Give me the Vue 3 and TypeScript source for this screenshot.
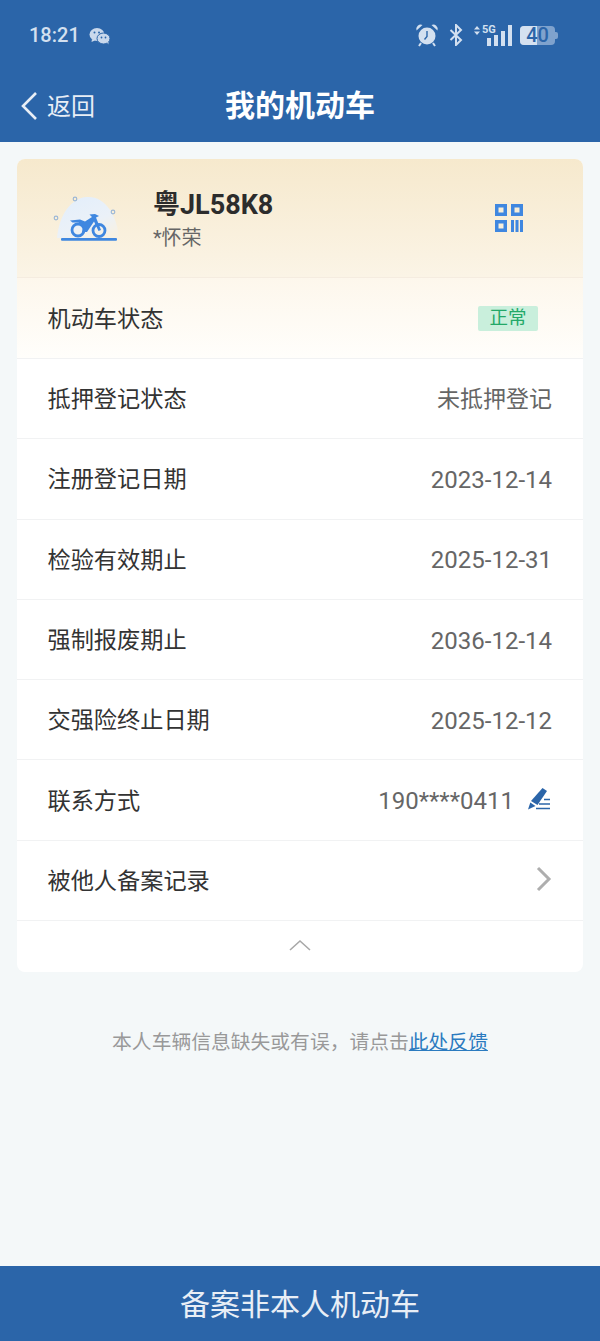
<template>
  <div class="page">
    <header class="head">
      <div class="status">
        <span class="time">18:21</span>
        <svg class="wechat" width="22" height="18" viewBox="0 0 22 18">
          <ellipse cx="8" cy="7.5" rx="7.5" ry="6.5" fill="#c9d8ec" />
          <path d="M3 12l-.5 3 3.500-1.500z" fill="#c9d8ec" />
          <ellipse cx="14.5" cy="11.5" rx="6.5" ry="5.5" fill="#c9d8ec" stroke="#2b65a9" stroke-width="1" />
          <path d="M18 15.500l1.500 2-.2-3z" fill="#c9d8ec" />
          <circle cx="5.500" cy="5.500" r="1" fill="#2b65a9" />
          <circle cx="10" cy="5.500" r="1" fill="#2b65a9" />
          <circle cx="12.500" cy="10.500" r=".9" fill="#2b65a9" />
          <circle cx="16.500" cy="10.500" r=".9" fill="#2b65a9" />
        </svg>
        <div class="status-right">
          <svg width="24" height="24" viewBox="0 0 24 24">
            <circle cx="12" cy="13" r="8.500" fill="#d3e0f0" />
            <path d="M12 8v5.500l-2.500 3" fill="none" stroke="#2b65a9" stroke-width="1.400" />
            <path d="M1.500 7.500a4.500 4.500 0 0 1 6-5.500zM22.500 7.500a4.500 4.500 0 0 0-6-5.500z" fill="#d3e0f0" />
            <path d="M6 20l-2 3M18 20l2 3" stroke="#d3e0f0" stroke-width="2" />
          </svg>
          <svg width="14" height="22" viewBox="0 0 14 22">
            <path d="M1.500 6l10.500 10-5 5V1l5 5L1.500 16" fill="none" stroke="#d3e0f0" stroke-width="2" />
          </svg>
          <div class="signal">
            <svg class="arrows" width="6" height="9" viewBox="0 0 6 9">
              <path d="M3 0l3 3.500H0zM3 9L0 5.500h6z" fill="#d3e0f0" />
            </svg>
            <span class="net">5G</span>
            <span class="bar b1"></span>
            <span class="bar b2"></span>
            <span class="bar b3"></span>
            <span class="bar b4"></span>
          </div>
          <div class="battery">
            <div class="fill"></div>
            <span class="level">40</span>
            <div class="nub"></div>
          </div>
        </div>
      </div>
      <div class="nav">
        <div class="back">
          <svg width="18" height="30" viewBox="0 0 18 30">
            <path d="M16 2L3 15l13 13" fill="none" stroke="#e8eef6" stroke-width="2.600" />
          </svg>
          <span>返回</span>
        </div>
        <h1>我的机动车</h1>
      </div>
    </header>

    <main class="content">
      <section class="card">
        <div class="plate">
          <svg class="moto" width="76" height="56" viewBox="0 0 76 56">
            <defs>
              <linearGradient id="bubble" x1="0.2" y1="0" x2="0.8" y2="1">
                <stop offset="0" stop-color="#e3eefb" />
                <stop offset="0.6" stop-color="#ebf1f8" />
                <stop offset="1" stop-color="#f8f1e2" />
              </linearGradient>
            </defs>
            <path d="M8 48C10 25 22 8 38 7c18-1 30 18 32 41z" fill="url(#bubble)" />
            <circle cx="26" cy="9" r="1.800" fill="none" stroke="#9db8d6" stroke-width="1.200" />
            <circle cx="64" cy="22" r="1.800" fill="none" stroke="#9db8d6" stroke-width="1.200" />
            <circle cx="7" cy="28" r="1.800" fill="none" stroke="#9db8d6" stroke-width="1.200" />
            <circle cx="29" cy="40" r="6" fill="none" stroke="#3f87e0" stroke-width="2.800" />
            <circle cx="50" cy="40.500" r="6" fill="none" stroke="#3f87e0" stroke-width="2.800" />
            <path d="M21 30.500L31 29.500l5 2 7-4.500-2.500-2.500 5.500-.500 4 2-3 1.500 5 12.500-2.500 1-4.500-9.500-7 10.500h-5l1.500-5-5-4.500h-6z" fill="#3f87e0" />
            <rect x="12" y="48" width="56" height="2.800" rx="1" fill="#3f87e0" />
          </svg>
          <div class="owner">
            <div class="number">粤JL58K8</div>
            <div class="name">*怀荣</div>
          </div>
          <svg class="qr" width="28" height="28" viewBox="0 0 28 28">
            <g fill="none" stroke="#3f87e0" stroke-width="3.500">
              <rect x="1.750" y="1.750" width="8.500" height="8.500" />
              <rect x="17.750" y="1.750" width="8.500" height="8.500" />
              <rect x="1.750" y="17.750" width="8.500" height="8.500" />
            </g>
            <path d="M16 16h3v12h-3zM20.500 16h3v12h-3zM25 16h3v12h-3z" fill="#3f87e0" />
          </svg>
        </div>
        <div class="row status-row">
          <span class="label">机动车状态</span>
          <span class="tag">正常</span>
        </div>
        <div v-for="r in rows" :key="r.label" class="row">
          <span class="label">{{ r.label }}</span>
          <span class="value" :class="{ num: r.num }">{{ r.value }}</span>
        </div>
        <div class="row">
          <span class="label">联系方式</span>
          <span class="value num">190****0411</span>
          <svg class="edit" width="24" height="24" viewBox="0 0 24 24">
            <path d="M14.500 0L19 3l-9.500 14L3 13z" fill="#2b65a9" />
            <path d="M2.300 14.500L7.500 18 0 21.500z" fill="#2b65a9" />
            <path d="M16 11.500h6M11 16h11M8 20.500h14" stroke="#2b65a9" stroke-width="1.400" />
          </svg>
        </div>
        <div class="row">
          <span class="label">被他人备案记录</span>
          <svg class="more" width="16" height="26" viewBox="0 0 16 26">
            <path d="M2 2l11 11L2 24" fill="none" stroke="#aeaeae" stroke-width="3" />
          </svg>
        </div>
        <div class="fold">
          <svg width="24" height="14" viewBox="0 0 24 14">
            <path d="M2 12L12 3l10 9" fill="none" stroke="#a8a8a8" stroke-width="1.600" />
          </svg>
        </div>
      </section>

      <p class="hint">本人车辆信息缺失或有误，请点击<a>此处反馈</a></p>
    </main>

    <footer class="foot">备案非本人机动车</footer>
  </div>
</template>

<script setup lang="ts">
const rows: { label: string; value: string; num?: boolean }[] = [
  { label: '抵押登记状态', value: '未抵押登记' },
  { label: '注册登记日期', value: '2023-12-14', num: true },
  { label: '检验有效期止', value: '2025-12-31', num: true },
  { label: '强制报废期止', value: '2036-12-14', num: true },
  { label: '交强险终止日期', value: '2025-12-12', num: true },
];
</script>

<style>
html,
body {
  margin: 0;
  background: #f4f8f9;
}
</style>

<style scoped>
.page {
  height: 1341px;
  display: flex;
  flex-direction: column;
  background: #f4f8f9;
  font-family: Roboto, 'Noto Sans CJK SC', sans-serif;
  overflow: hidden;
}
.head {
  background: #2b65a9;
  height: 142px;
  flex: none;
}
.status {
  height: 70px;
  display: flex;
  align-items: center;
  padding: 0 45px 0 29px;
  color: #d3e0f0;
}
.time {
  font-size: 20px;
  font-weight: 500;
}
.wechat {
  margin-left: 9px;
  margin-top: 2px;
}
.status-right {
  margin-left: auto;
  display: flex;
  align-items: center;
  gap: 10px;
}
.signal {
  position: relative;
  width: 39px;
  height: 21px;
  display: flex;
  align-items: flex-end;
  justify-content: flex-end;
  gap: 2.500px;
}
.arrows {
  position: absolute;
  left: 1px;
  top: 1px;
}
.net {
  position: absolute;
  left: 9px;
  top: -1px;
  font-size: 11px;
  font-weight: 700;
  line-height: 12px;
}
.bar {
  width: 4.500px;
  background: #d3e0f0;
}
.b1 { height: 8px; }
.b2 { height: 11px; }
.b3 { height: 15px; }
.b4 { height: 21px; }
.battery {
  position: relative;
  width: 35px;
  height: 19px;
  border-radius: 4px;
  background: #7fa2cd;
  margin-left: -2px;
}
.fill {
  width: 17px;
  height: 19px;
  background: #d5e1f0;
  border-radius: 4px 0 0 4px;
}
.level {
  position: absolute;
  inset: 0;
  text-align: center;
  font-size: 20px;
  font-weight: 500;
  line-height: 19px;
  color: #2b65a9;
}
.nub {
  position: absolute;
  right: -3px;
  top: 6px;
  width: 3px;
  height: 7px;
  border-radius: 0 2px 2px 0;
  background: #7fa2cd;
}
.nav {
  height: 72px;
  box-sizing: border-box;
  padding: 0 20px 6px;
  display: grid;
  grid-template-columns: 1fr auto 1fr;
  align-items: center;
}
.back {
  display: flex;
  align-items: center;
  gap: 9px;
  margin-top: 6px;
  color: #e8eef6;
  font-size: 24px;
}
.back span {
  margin-bottom: 4px;
}
h1 {
  margin: 0;
  color: #fff;
  font-size: 30px;
  font-weight: 700;
}
.content {
  flex: 1;
  padding: 17px 17px 0;
}
.card {
  background: #fff;
  border-radius: 8px;
  overflow: hidden;
}
.plate {
  height: 119px;
  box-sizing: border-box;
  display: flex;
  align-items: center;
  padding: 0 60px 0 32px;
  background: linear-gradient(#f6e9cd, #fbf4e6);
  border-bottom: 1px solid #f5ece0;
}
.owner {
  margin-left: 28px;
  padding-top: 3px;
}
.number {
  font-size: 27px;
  font-weight: 700;
  line-height: 37px;
  color: #2c2c2c;
}
.name {
  font-size: 20px;
  line-height: 28px;
  color: #666;
}
.qr {
  margin-left: auto;
}
.row {
  height: 80.300px;
  box-sizing: border-box;
  display: flex;
  align-items: center;
  padding: 0 31px 3px 30.500px;
  border-bottom: 1px solid #f1f2f3;
}
.status-row {
  background: linear-gradient(#fdf7ec, #fffefb);
  height: 81px;
}
.label {
  font-size: 23.200px;
  color: #333;
}
.value {
  margin-left: auto;
  font-size: 23px;
  color: #666;
}
.value.num {
  font-size: 24px;
  padding-top: 5px;
}
.tag {
  margin-left: auto;
  margin-right: 14px;
  margin-top: 3px;
  width: 60px;
  height: 25px;
  background: #c9efdc;
  border-radius: 2px;
  color: #22a868;
  font-size: 18.500px;
  line-height: 25px;
  text-align: center;
}
.edit {
  margin-left: 14px;
  margin-top: 3px;
}
.more {
  margin-left: auto;
}
.fold {
  height: 50.500px;
  display: flex;
  align-items: center;
  justify-content: center;
  padding-bottom: 2px;
  box-sizing: border-box;
}
.hint {
  margin: 54px 0 0;
  text-align: center;
  font-size: 19.800px;
  color: #999;
}
.hint a {
  color: #2b7bc0;
  text-decoration: underline;
}
.foot {
  flex: none;
  height: 75px;
  background: #2b65a9;
  color: #e8eef6;
  font-size: 30px;
  line-height: 77px;
  text-align: center;
}
</style>
